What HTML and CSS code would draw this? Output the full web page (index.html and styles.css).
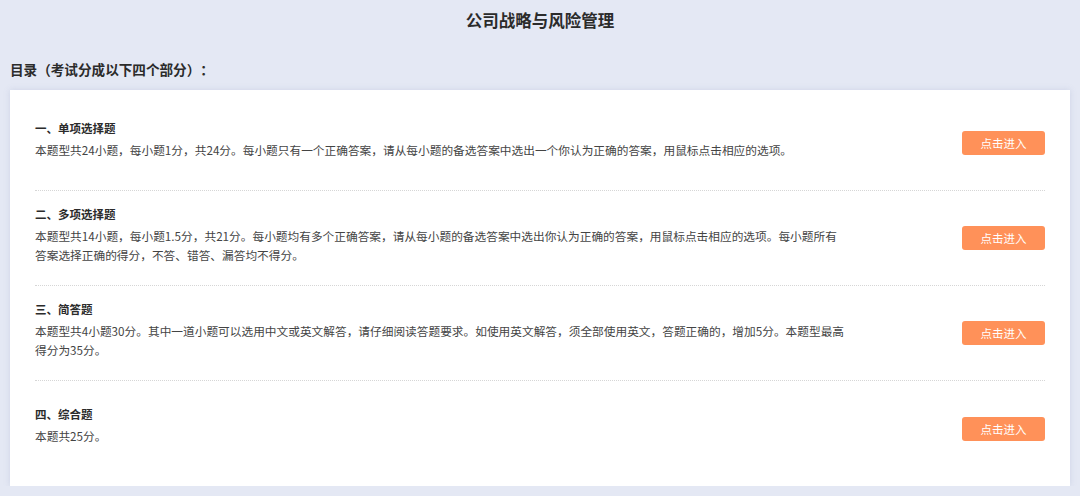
FILE: index.html
```html
<!DOCTYPE html>
<html lang="zh-CN">
<head>
  <meta charset="UTF-8">
  <title>公司战略与风险管理</title>
  <link rel="stylesheet" href="styles.css">
</head>
<body>

<h1 class="titulo">公司战略与风险管理</h1>

<h2 class="indice">目录（考试分成以下四个部分）：</h2>

<div class="tarjeta">
  <div class="parte">
    <div class="texto">
      <div class="nombre">一、单项选择题</div>
      <p class="desc">本题型共24小题，每小题1分，共24分。每小题只有一个正确答案，请从每小题的备选答案中选出一个你认为正确的答案，用鼠标点击相应的选项。</p>
    </div>
    <button class="entrar">点击进入</button>
  </div>

  <div class="parte">
    <div class="texto">
      <div class="nombre">二、多项选择题</div>
      <p class="desc">本题型共14小题，每小题1.5分，共21分。每小题均有多个正确答案，请从每小题的备选答案中选出你认为正确的答案，用鼠标点击相应的选项。每小题所有答案选择正确的得分，不答、错答、漏答均不得分。</p>
    </div>
    <button class="entrar">点击进入</button>
  </div>

  <div class="parte">
    <div class="texto">
      <div class="nombre">三、简答题</div>
      <p class="desc">本题型共4小题30分。其中一道小题可以选用中文或英文解答，请仔细阅读答题要求。如使用英文解答，须全部使用英文，答题正确的，增加5分。本题型最高得分为35分。</p>
    </div>
    <button class="entrar">点击进入</button>
  </div>

  <div class="parte">
    <div class="texto">
      <div class="nombre">四、综合题</div>
      <p class="desc">本题共25分。</p>
    </div>
    <button class="entrar">点击进入</button>
  </div>
</div>

</body>
</html>
```

FILE: styles.css
```css
body {
  font-family: "Noto Sans CJK SC", "Noto Sans", sans-serif;
  font-kerning: none;
  text-spacing-trim: space-all;
  background-color: #e4e8f4;
  color: #333;
  margin: 0;
  padding: 0 10px;
}
.titulo {
  margin: 0;
  padding-top: 9px;
  height: 45px;
  box-sizing: border-box;
  text-align: center;
  font-size: 16.5px;
  line-height: 22px;
  font-weight: bold;
  color: #2b2b2b;
}
.indice {
  margin: 0;
  padding-top: 14px;
  height: 45px;
  box-sizing: border-box;
  font-size: 13.6px;
  line-height: 20px;
  font-weight: bold;
  color: #2b2b2b;
}
.tarjeta {
  background: #fff;
  padding: 6px 25px 10px;
  box-shadow: 0 0 6px rgba(140, 150, 190, 0.25);
}
.parte {
  display: flex;
  align-items: center;
  justify-content: space-between;
  height: 95px;
  box-sizing: border-box;
  border-bottom: 1px dotted #d6d6d6;
}
.parte:last-child {
  border-bottom: none;
}
.texto {
  padding-bottom: 8px;
}
.nombre {
  font-size: 11.5px;
  line-height: 20px;
  font-weight: bold;
  color: #2b2b2b;
  margin-bottom: 2px;
}
.desc {
  margin: 0;
  max-width: 809px;
  font-size: 11.7px;
  line-height: 19.5px;
  color: #444;
}
.entrar {
  width: 83px;
  height: 24px;
  flex-shrink: 0;
  background-color: #ff9159;
  color: #fff;
  border: none;
  border-radius: 3px;
  font-family: inherit;
  font-size: 11.5px;
  cursor: pointer;
}
```
